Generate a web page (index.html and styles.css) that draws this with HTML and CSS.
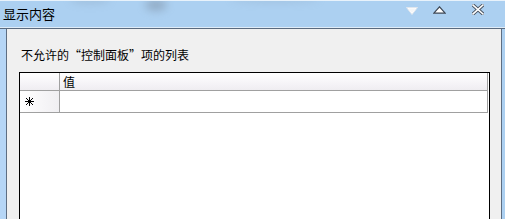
FILE: index.html
```html
<!DOCTYPE html>
<html lang="zh-CN">
<head>
<meta charset="utf-8">
<title>显示内容</title>
<link rel="stylesheet" href="styles.css">
</head>
<body>
<div class="window">
  <div class="titlebar">
    <span class="blur blur-a"></span>
    <span class="blur blur-b"></span>
    <span class="blur blur-c"></span>
    <span class="title">显示内容</span>
    <div class="controls">
      <svg class="ctl ctl-menu" width="12" height="8" viewBox="0 0 12 8">
        <path d="M0.5 0.5 H11.5 L6 7.5 Z" fill="#ffffff" stroke="#dfe6ee" stroke-width="1"/>
        <path d="M2.5 1.5 H9.5 L6 6 Z" fill="#f4f6f8"/>
      </svg>
      <svg class="ctl ctl-up" width="13" height="8" viewBox="0 0 13 8">
        <path d="M0.8 7.2 H12.2 L6.5 0.8 Z" fill="#ffffff" stroke="#3c4654" stroke-width="1.2" stroke-linejoin="miter"/>
      </svg>
      <svg class="ctl ctl-close" width="12" height="11" viewBox="0 0 12 11">
        <path d="M1 1 L11 10 M11 1 L1 10" stroke="#4a5462" stroke-width="3.4" stroke-linecap="square"/>
        <path d="M1 1 L11 10 M11 1 L1 10" stroke="#ffffff" stroke-width="1.6" stroke-linecap="square"/>
      </svg>
    </div>
  </div>
  <div class="frame">
    <div class="client">
      <div class="label">不允许的“控制面板”项的列表</div>
      <div class="table">
        <div class="grid">
          <div class="row head">
            <div class="rowhdr"></div>
            <div class="cell">值</div>
          </div>
          <div class="row data">
            <div class="rowhdr">
              <svg width="9" height="9" viewBox="0 0 9 9">
                <path d="M4.5 0 V9 M0 4.5 H9" stroke="#000" stroke-width="1"/>
                <path d="M1 1 L8 8 M8 1 L1 8" stroke="#000" stroke-width="1"/>
              </svg>
            </div>
            <div class="cell"></div>
          </div>
        </div>
      </div>
    </div>
  </div>
</div>
</body>
</html>
```
FILE: styles.css
```css
html, body {
  margin: 0;
  padding: 0;
  width: 505px;
  height: 219px;
  overflow: hidden;
  background: #acd0f1;
  font-family: "Noto Sans CJK SC", "Noto Sans", sans-serif;
}

.window {
  width: 505px;
  height: 219px;
  display: flex;
  flex-direction: column;
}

.titlebar {
  position: relative;
  flex: none;
  background: #acd0f1;
  border-top: 1px solid #e8f2fb;
  border-bottom: 1px solid #dfecf8;
  box-sizing: border-box;
  height: 28px;
  display: flex;
  align-items: center;
  overflow: hidden;
}

.blur {
  position: absolute;
  border-radius: 50%;
  filter: blur(4px);
  background: #7d8fa3;
  opacity: 0.55;
}
.blur-a { left: 145px; top: -2px; width: 22px; height: 12px; }
.blur-b { left: 70px; top: -6px; width: 40px; height: 9px; opacity: 0.25; }
.blur-c { left: 230px; top: -6px; width: 90px; height: 8px; opacity: 0.2; }

.title {
  position: relative;
  margin-left: 3px;
  margin-top: -1px;
  font-size: 13px;
  line-height: 16px;
  color: #000;
}

.controls {
  position: relative;
  margin-left: auto;
  margin-right: 21px;
  display: flex;
  align-items: flex-start;
  height: 12px;
  margin-top: -6px;
}

.ctl { display: block; }
.ctl-menu { margin-top: 2px; }
.ctl-up { margin-left: 15px; margin-top: 1px; }
.ctl-close { margin-left: 26px; margin-top: -1px; }

.frame {
  flex: 1;
  display: flex;
  padding-left: 6px;
  padding-right: 3px;
  background: linear-gradient(to right, #b6d6f6 0, #b6d6f6 6px, #acd0f1 6px);
  border-top: 1px solid #5a6a7e;
}

.client {
  flex: 1;
  background: #f0f0f0;
  border-left: 1px solid #5e6e82;
  border-right: 1px solid #5e6e82;
  padding: 0 11px 0 12px;
  display: flex;
  flex-direction: column;
}

.label {
  margin-top: 18px;
  margin-left: 2px;
  font-size: 12px;
  line-height: 16px;
  color: #000;
}

.table {
  margin-top: 9px;
  flex: 1;
  background: #ffffff;
  border: 1px solid #000;
  border-bottom: none;
}

.grid {
  width: 467px;
  border-right: 1px solid #a0a0a0;
}

.row {
  display: flex;
  border-bottom: 1px solid #a0a0a0;
}

.row.head { height: 17px; }
.row.data { height: 21px; }

.rowhdr {
  width: 40px;
  flex: none;
  border-right: 1px solid #a0a0a0;
  display: flex;
  align-items: center;
  padding-left: 5px;
  box-sizing: border-box;
}

.head .rowhdr,
.head .cell {
  background: linear-gradient(to bottom, #ffffff 0%, #f4f2f6 70%, #efedf1 100%);
}

.data .rowhdr {
  background: linear-gradient(to right, #ffffff 0%, #f6f5f7 60%, #f0eff2 100%);
}

.cell {
  flex: 1;
  font-size: 12px;
  line-height: 17px;
  padding-left: 3px;
  color: #000;
}
```
